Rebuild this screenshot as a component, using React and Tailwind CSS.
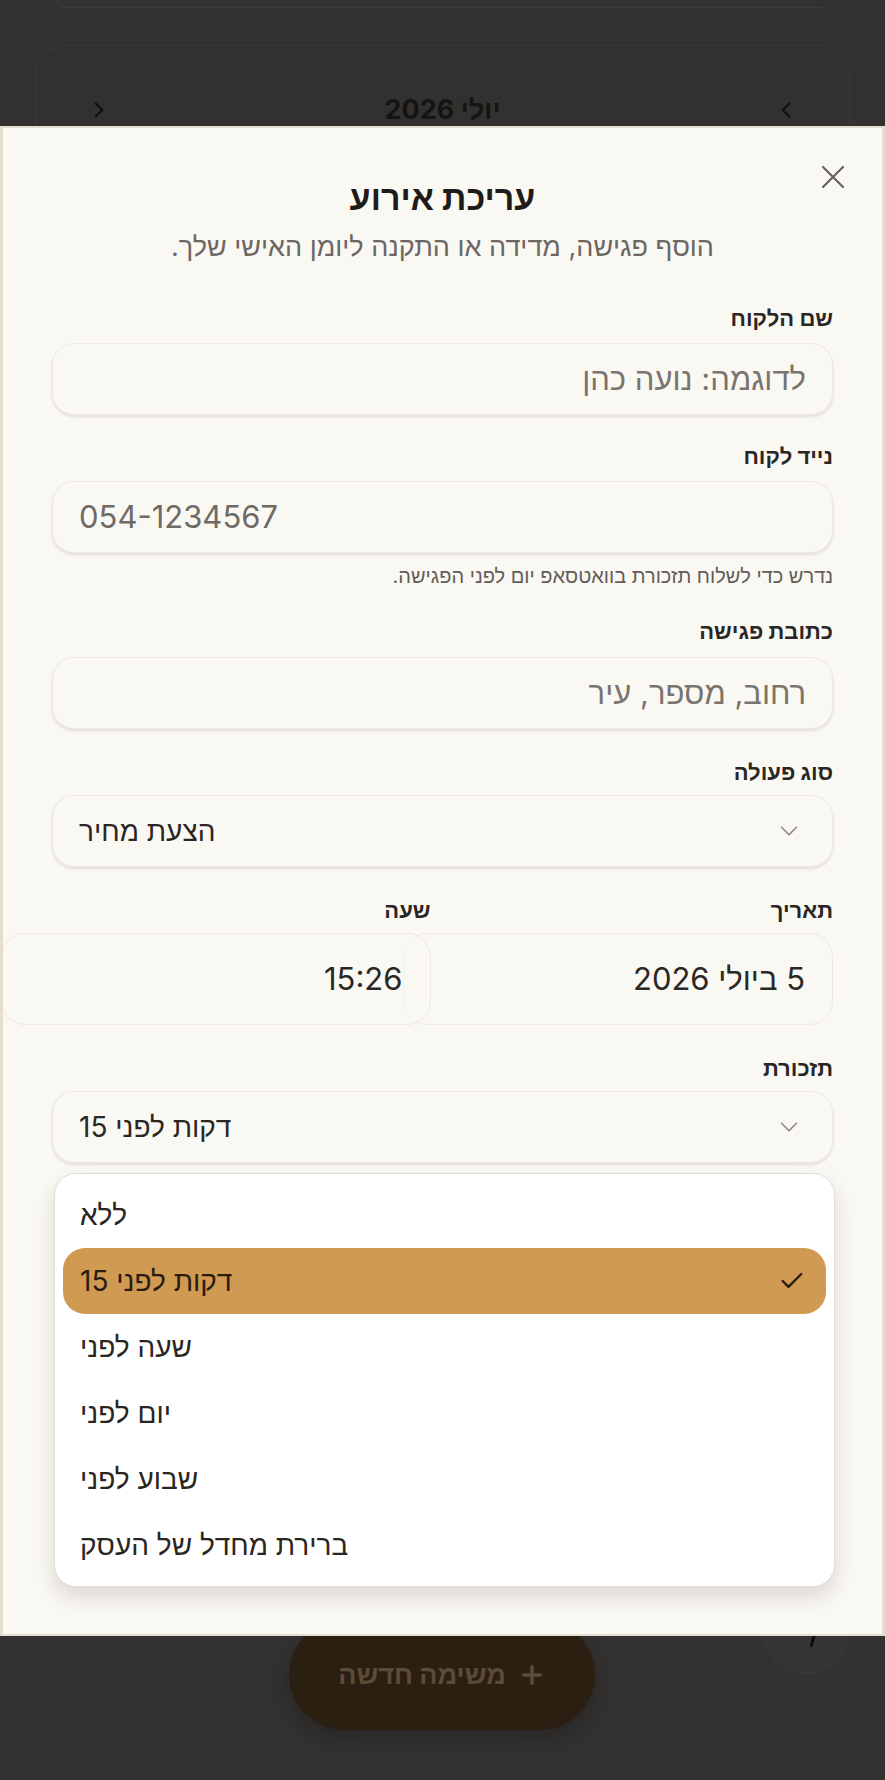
import { ChevronDown, ChevronLeft, ChevronRight, Check, X, Plus } from "lucide-react"

const font = { fontFamily: "Inter, 'Liberation Sans', sans-serif" }

const reminderOptions = ["ללא", "15 דקות לפני", "שעה לפני", "יום לפני", "שבוע לפני", "ברירת מחדל של העסק"]

function Label({ children, className = "" }) {
    return (
        <div className={"text-[22px] leading-[26px] font-bold text-[#2a2623] text-right " + className}>{children}</div>
    )
}

function Field({ children, className = "", dir }) {
    return (
        <div dir={dir} className={"h-[72px] rounded-[22px] border border-[#efe9df] bg-[#faf8f3] shadow-[0_2px_3px_rgba(60,45,30,0.12)] flex items-center px-[26px] text-[31px] " + className}>
            {children}
        </div>
    )
}

function SelectField({ value, className = "" }) {
    return (
        <Field dir="ltr" className={"justify-between !pr-[28px] !text-[28px] " + className}>
            <span className="text-[#2b2622]">{value}</span>
            <ChevronDown size={30} strokeWidth={1.3} className="text-[#8f8982]" />
        </Field>
    )
}

export default function App() {
    return (
        <div dir="rtl" style={font} className="relative w-[885px] h-[1780px] overflow-hidden bg-[#333231]">
            {/* page behind the dialog */}
            <div className="mx-[56px] h-[8px] rounded-b-[20px] border-b border-x border-[#3c3a37]" />
            <div className="mx-[35px] mt-[37px] h-[700px] rounded-[32px] border border-[#3c3a37] bg-[#323130]">
                <div className="flex items-center justify-between px-[50px] pt-[44px]">
                    <ChevronLeft size={26} strokeWidth={2.2} className="text-[#121110]" />
                    <div className="text-[27px] font-bold text-[#151412]">יולי 2026</div>
                    <ChevronRight size={26} strokeWidth={2.2} className="text-[#121110]" />
                </div>
            </div>

            <div className="absolute top-[1620px] left-[289px] w-[306px] h-[110px] rounded-full bg-[#2b1f12] flex items-center justify-center gap-3 shadow-[0_8px_24px_rgba(0,0,0,0.25)]">
                <Plus size={28} strokeWidth={3} className="text-[#5c4b37]" />
                <span className="text-[27px] font-bold text-[#5c4b37]">משימה חדשה</span>
            </div>
            <div className="absolute top-[1587px] left-[763px] w-[87px] h-[87px] rounded-full bg-[#373533] border border-[#3d3b38] flex items-center justify-center">
                <ChevronRight size={30} strokeWidth={2.4} className="text-[#0e0d0c] translate-x-[4px] translate-y-[6px] -rotate-[30deg]" />
            </div>

            {/* dialog */}
            <div className="absolute top-[126px] left-0 w-[885px] h-[1510px] bg-[#faf8f3] border-t-2 border-x-[3px] border-b-2 border-[#e4ddd0] px-[49px] overflow-hidden">
                <button className="absolute top-[29px] right-[29px] text-[#66605b]">
                    <X size={40} strokeWidth={1.3} />
                </button>

                <div className="pt-[52px] text-center text-[34px] leading-[36px] font-bold text-[#1f1b18]">עריכת אירוע</div>
                <div className="mt-[16px] text-center text-[27px] leading-[30px] text-[#6d6762]">הוסף פגישה, מדידה או התקנה ליומן האישי שלך.</div>

                <Label className="mt-[43px]">שם הלקוח</Label>
                <Field className="mt-[12px] text-[#7a746e]">לדוגמה: נועה כהן</Field>

                <Label className="mt-[28px]">נייד לקוח</Label>
                <Field className="mt-[12px] text-[#6f6a65]">
                    <span dir="ltr" className="w-full text-left">054-1234567</span>
                </Field>
                <div className="mt-[12px] text-[20px] leading-[22px] text-[#625d58] text-right">נדרש כדי לשלוח תזכורת בוואטסאפ יום לפני הפגישה.</div>

                <Label className="mt-[31px]">כתובת פגישה</Label>
                <Field className="mt-[13px] text-[#7a746e]">רחוב, מספר, עיר</Field>

                <Label className="mt-[30px]">סוג פעולה</Label>
                <SelectField className="mt-[10px]" value="הצעת מחיר" />

                <div className="mt-[30px] grid grid-cols-2 gap-[24px]">
                    <div>
                        <Label>תאריך</Label>
                        <div className="mt-[10px] w-[430px] h-[92px] rounded-[24px] border border-[#efe9df] bg-[#faf8f3] flex items-center pr-[27px] text-[31px] text-[#2b2724]">5 ביולי 2026</div>
                    </div>
                    <div>
                        <Label>שעה</Label>
                        <div className="mt-[10px] w-[430px] h-[92px] rounded-[24px] border border-[#efe9df] bg-[#faf8f3]/60 flex items-center pr-[27px] text-[31px] text-[#2b2724]">15:26</div>
                    </div>
                </div>

                <Label className="mt-[30px]">תזכורת</Label>
                <SelectField className="mt-[10px]" value="15 דקות לפני" />
            </div>

            {/* open reminder list */}
            <div dir="ltr" className="absolute top-[1173px] left-[54px] w-[781px] rounded-[22px] border border-[#e2ddd5] bg-white p-[8px] shadow-[0_10px_20px_rgba(40,30,20,0.14)]">
                {reminderOptions.map((opt, i) => (
                    <div
                        key={opt}
                        className={"h-[66px] flex items-center justify-between pl-[17px] pr-[20px] rounded-[22px] text-[28px] " + (i === 1 ? "bg-[#d09a52] text-[#2a1c10]" : "text-[#2b2520]")}
                    >
                        <span>{opt}</span>
                        {i === 1 && <Check size={28} strokeWidth={2} className="text-[#2a1c10]" />}
                    </div>
                ))}
            </div>
        </div>
    )
}
